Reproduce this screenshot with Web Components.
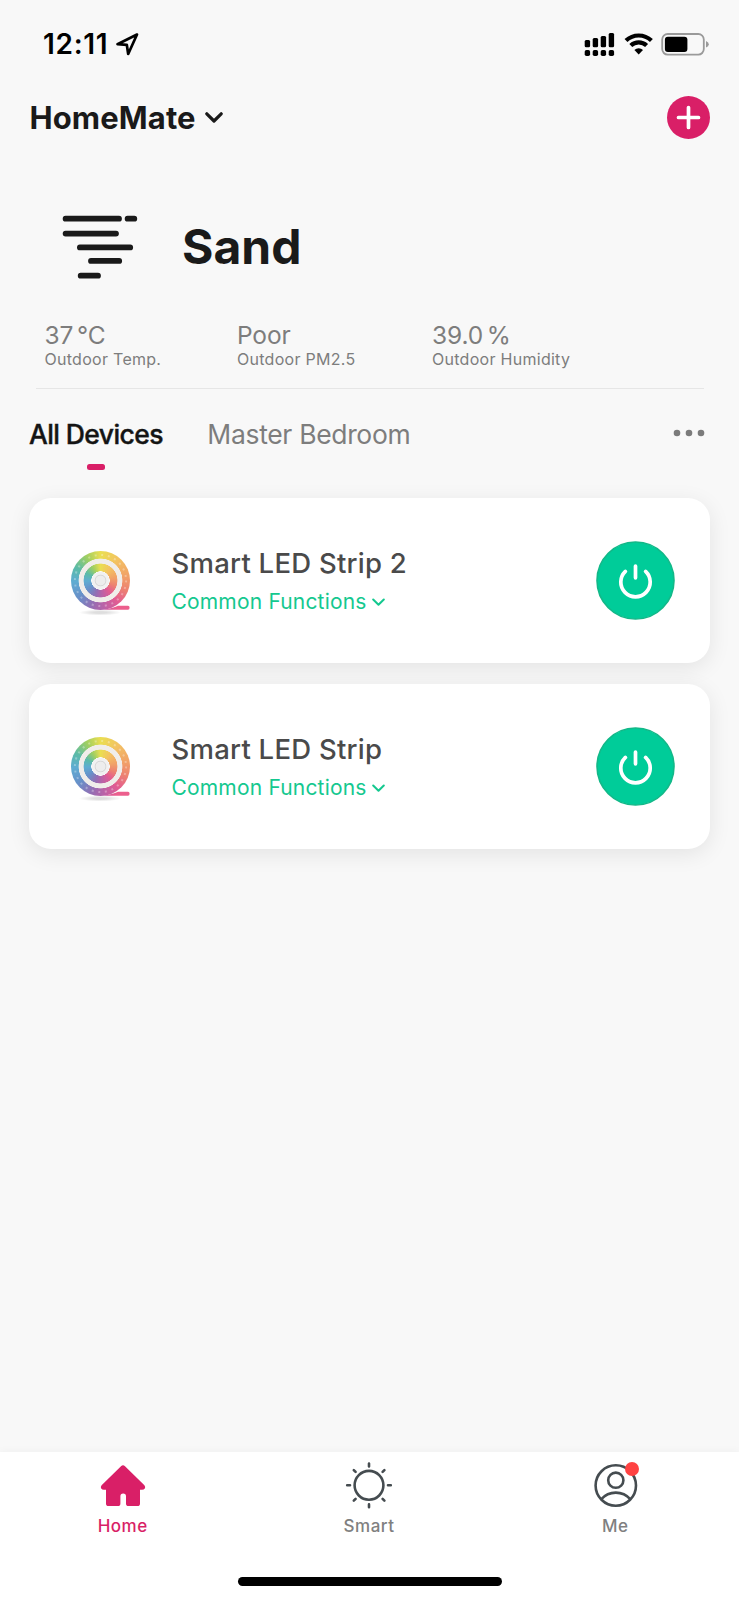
<!DOCTYPE html>
<html lang="en">
<head>
<meta charset="utf-8">
<title>HomeMate</title>
<style>
  body {
    margin: 0;
    background: #f8f8f8;
    font-family: Inter, "Liberation Sans", sans-serif;
    -webkit-font-smoothing: antialiased;
  }
</style>
</head>
<body>
<home-app>
  <status-bar slot="top" time="12:11"></status-bar>
  <home-header slot="top">HomeMate</home-header>
  <weather-panel condition="Sand">
    <weather-stat value="37 °C" label="Outdoor Temp."></weather-stat>
    <weather-stat value="Poor" label="Outdoor PM2.5"></weather-stat>
    <weather-stat value="39.0 %" label="Outdoor Humidity"></weather-stat>
  </weather-panel>
  <room-tabs>
    <room-tab active>All Devices</room-tab>
    <room-tab>Master Bedroom</room-tab>
  </room-tabs>
  <device-list>
    <device-card name="Smart LED Strip 2"></device-card>
    <device-card name="Smart LED Strip"></device-card>
  </device-list>
  <tab-bar slot="bottom">
    <tab-item icon="home" active>Home</tab-item>
    <tab-item icon="sun">Smart</tab-item>
    <tab-item icon="user" badge>Me</tab-item>
  </tab-bar>
</home-app>

<script>
class BaseElement extends HTMLElement {
  constructor() {
    super();
    this.attachShadow({ mode: 'open' });
  }

  connectedCallback() {
    this.shadowRoot.innerHTML = this.template();
  }

  attr(name) {
    return this.getAttribute(name) || '';
  }
}

class HomeApp extends BaseElement {
  template() {
    return `
      <style>
        :host {
          display: flex;
          flex-direction: column;
          height: 1600px;
          overflow: hidden;
        }
        main { flex: 1; min-height: 0; }
      </style>
      <slot name="top"></slot>
      <main><slot></slot></main>
      <slot name="bottom"></slot>
    `;
  }
}

class StatusBar extends BaseElement {
  template() {
    return `
      <style>
        :host {
          display: flex;
          align-items: center;
          justify-content: space-between;
          box-sizing: border-box;
          height: 88px;
          padding: 0 30px 0 43px;
          color: #000;
        }
        .left { display: flex; align-items: center; gap: 7px; }
        .time { font-size: 28px; font-weight: 600; line-height: 34px; letter-spacing: 0.7px; }
        svg { display: block; }
      </style>
      <div class="left">
        <span class="time">${this.attr('time')}</span>
        <svg width="24" height="24" viewBox="0 0 24 24" fill="none" stroke="#000" stroke-width="2.7" stroke-linejoin="round">
          <path d="M22 2.5 L2.5 12.2 L11.8 12.8 L13.2 22 Z"/>
        </svg>
      </div>
      <svg width="126" height="24" viewBox="0 0 126 24">
        <g fill="#000">
          <rect x="1.7" y="8" width="5.4" height="7.3" rx="1.5"/>
          <rect x="9.7" y="6" width="5.4" height="9.3" rx="1.5"/>
          <rect x="17.7" y="3.9" width="5.4" height="11.4" rx="1.5"/>
          <rect x="25.7" y="1" width="5.4" height="14.3" rx="1.5"/>
          <rect x="1.7" y="18" width="5.4" height="6" rx="1.8"/>
          <rect x="9.7" y="18" width="5.4" height="6" rx="1.8"/>
          <rect x="17.7" y="18" width="5.4" height="6" rx="1.8"/>
          <rect x="25.7" y="18" width="5.4" height="6" rx="1.8"/>
        </g>
        <g fill="none" stroke="#000" stroke-width="4.2">
          <path d="M43 8.6 A18.4 18.4 0 0 1 68.4 8.6"/>
          <path d="M47.8 13.6 A11.4 11.4 0 0 1 63.6 13.6"/>
        </g>
        <path d="M55.7 22.4 L51.4 18 A6 6 0 0 1 60 18 Z"/>
        <rect x="79.2" y="2" width="41.6" height="20.6" rx="5.5" fill="none" stroke="#9a9a9a" stroke-width="1.8"/>
        <rect x="81.9" y="4.7" width="22.5" height="15.2" rx="3"/>
        <path d="M123 9 Q125.8 10.2 125.8 12.3 Q125.8 14.4 123 15.6 Z" fill="#9a9a9a"/>
      </svg>
    `;
  }
}

class HomeHeader extends BaseElement {
  template() {
    return `
      <style>
        :host {
          display: flex;
          align-items: center;
          justify-content: space-between;
          height: 60px;
          padding: 0 29px 0 29.5px;
          color: #1a1a1a;
        }
        .title {
          display: flex;
          align-items: center;
          gap: 9.5px;
          font-size: 31px;
          font-weight: 700;
          line-height: 38px;
          letter-spacing: 0.1px;
        }
        svg { display: block; }
        .add { margin-top: -1px; }
      </style>
      <div class="title">
        <slot></slot>
        <svg width="18" height="12" viewBox="0 0 18 12" fill="none" stroke="#1a1a1a" stroke-width="3.2" stroke-linecap="round" stroke-linejoin="round">
          <path d="M1.8 1.8 L9 9 L16.2 1.8"/>
        </svg>
      </div>
      <svg class="add" width="43" height="43" viewBox="0 0 43 43">
        <circle cx="21.5" cy="21.5" r="21.5" fill="#d91f67"/>
        <path d="M21.5 11.5 V31.5 M11.5 21.5 H31.5" stroke="#fff" stroke-width="3.7" stroke-linecap="round"/>
      </svg>
    `;
  }
}

class WeatherPanel extends BaseElement {
  template() {
    return `
      <style>
        :host { display: block; padding: 64px 35.5px 0 35.5px; }
        .main {
          display: flex;
          align-items: center;
          gap: 43px;
          height: 70px;
          padding-left: 26.5px;
        }
        .name {
          font-size: 48px;
          font-weight: 700;
          line-height: 58px;
          color: #1a1a1a;
          letter-spacing: 0;
        }
        svg { display: block; }
        .stats {
          display: grid;
          grid-template-columns: 192.5px 195px 1fr;
          padding: 40px 0 18px 9px;
          border-bottom: 1px solid #e6e6e6;
        }
      </style>
      <div class="main">
        <svg width="77" height="64" viewBox="0 0 77 64" stroke="#1a1a1a" stroke-width="5.8" stroke-linecap="round">
          <path d="M3.6 3.7 H57 M65.6 3.7 H72.3 M3.6 18.6 H54 M17.9 32.4 H68.2 M29 45.9 H57.2 M18.7 60.7 H36"/>
        </svg>
        <div class="name">${this.attr('condition')}</div>
      </div>
      <div class="stats"><slot></slot></div>
    `;
  }
}

class WeatherStat extends BaseElement {
  template() {
    return `
      <style>
        :host { display: block; color: #7d7d7d; white-space: nowrap; }
        .value { font-size: 24.5px; line-height: 26px; letter-spacing: -0.15px; word-spacing: -3px; }
        .label { font-size: 16px; line-height: 22px; letter-spacing: 0.28px; }
      </style>
      <div class="value">${this.attr('value')}</div>
      <div class="label">${this.attr('label')}</div>
    `;
  }
}

class RoomTabs extends BaseElement {
  template() {
    return `
      <style>
        :host {
          display: flex;
          align-items: flex-start;
          justify-content: space-between;
          height: 80px;
          padding: 29px 34px 0 29px;
        }
        .tabs { display: flex; gap: 44.5px; }
        svg { display: block; margin-top: 11px; }
      </style>
      <div class="tabs"><slot></slot></div>
      <svg width="32" height="8" viewBox="0 0 32 8" fill="#7b7b7b">
        <circle cx="4" cy="4" r="3.3"/><circle cx="16" cy="4" r="3.3"/><circle cx="28" cy="4" r="3.3"/>
      </svg>
    `;
  }
}

class RoomTab extends BaseElement {
  template() {
    return `
      <style>
        :host {
          display: flex;
          flex-direction: column;
          align-items: center;
          gap: 13px;
          font-size: 26.5px;
          line-height: 33px;
          letter-spacing: -0.33px;
          color: #7d7d7d;
          white-space: nowrap;
        }
        :host([active]) {
          color: #141414;
          font-weight: 500;
          letter-spacing: -0.6px;
          -webkit-text-stroke: 0.4px #141414;
        }
        .mark { width: 18px; height: 6px; border-radius: 2.5px; }
        :host([active]) .mark { background: #d91f67; }
      </style>
      <span><slot></slot></span>
      <div class="mark"></div>
    `;
  }
}

class DeviceList extends BaseElement {
  template() {
    return `
      <style>
        :host { display: flex; flex-direction: column; gap: 21px; padding: 0 29px 0 28.5px; }
      </style>
      <slot></slot>
    `;
  }
}

class LedReel extends BaseElement {
  template() {
    return `
      <style>
        :host { display: block; position: relative; width: 59px; height: 59px; }
        .disc {
          width: 59px;
          height: 59px;
          border-radius: 50%;
          opacity: 0.92;
          background:
            radial-gradient(circle, #ececec 0 4.6px, #d2d2d2 5.3px, #f0f0f0 6.2px 8.4px, #fafafa 9px, transparent 9.4px 16.6px, #efece9 17.2px 21.6px, transparent 22.2px),
            conic-gradient(#e9dc43, #f2bd55 40deg, #f09a5c 80deg, #ec7865 110deg, #e14f88 140deg, #b9549f 170deg, #8c62ad 198deg, #5c86c4 232deg, #52a6cf 268deg, #4eb6a0 298deg, #98cb55 330deg, #e9dc43);
        }
        svg { position: absolute; left: 0; top: 0; overflow: visible; }
      </style>
      <div class="disc"></div>
      <svg width="59" height="66" viewBox="0 0 59 66">
        <defs>
          <radialGradient id="ground"><stop offset="0.3" stop-color="#000" stop-opacity="0.13"/><stop offset="1" stop-color="#000" stop-opacity="0"/></radialGradient>
          <linearGradient id="tail"><stop offset="0" stop-color="#c855a0"/><stop offset="0.5" stop-color="#ec5f8d"/></linearGradient>
        </defs>
        <circle cx="29.5" cy="29.5" r="25.6" fill="none" stroke="#fff" stroke-opacity="0.3" stroke-width="2" stroke-dasharray="2 4.7"/>
        <ellipse cx="29" cy="61.5" rx="21" ry="3" fill="url(#ground)"/>
        <path d="M33 58.8 Q43 57 47 54.8 H57 Q58.6 54.8 58.6 56.8 T57 58.8 Z" fill="url(#tail)"/>
      </svg>
    `;
  }
}

class DeviceCard extends BaseElement {
  template() {
    return `
      <style>
        :host {
          display: flex;
          align-items: center;
          box-sizing: border-box;
          height: 165px;
          padding: 0 35.5px 0 42px;
          border-radius: 22px;
          background: #fff;
          box-shadow: 0 5px 22px rgba(0, 0, 0, 0.085);
        }
        .info { flex: 1; padding-left: 42px; padding-top: 4px; }
        .name {
          font-size: 27.5px;
          font-weight: 500;
          line-height: 38px;
          letter-spacing: 0.25px;
          color: #4a4a4a;
        }
        .functions {
          display: flex;
          align-items: center;
          gap: 5px;
          margin-top: 1px;
          font-size: 21px;
          line-height: 38px;
          letter-spacing: 0.18px;
          color: #14c88f;
        }
        svg { display: block; }
      </style>
      <led-reel></led-reel>
      <div class="info">
        <div class="name">${this.attr('name')}</div>
        <div class="functions">
          <span>Common Functions</span>
          <svg width="13" height="9" viewBox="0 0 13 9" fill="none" stroke="#14c88f" stroke-width="2" stroke-linecap="round" stroke-linejoin="round">
            <path d="M1.2 1.5 L6.5 6.8 L11.8 1.5"/>
          </svg>
        </div>
      </div>
      <svg width="79" height="79" viewBox="0 0 79 79">
        <circle cx="39.5" cy="39.5" r="38.5" fill="#00cc99" stroke="#12b888" stroke-width="1.6"/>
        <g fill="none" stroke="#fff" stroke-width="3.7" stroke-linecap="round">
          <path d="M29.4 30.4 A14.7 14.7 0 1 0 49.6 30.4 M39.5 25 V36.8"/>
        </g>
      </svg>
    `;
  }
}

class TabBar extends BaseElement {
  template() {
    return `
      <style>
        :host {
          display: flex;
          flex-direction: column;
          align-items: center;
          justify-content: space-between;
          height: 148px;
          background: #fff;
          box-shadow: 0 -1px 8px rgba(0, 0, 0, 0.035);
        }
        nav { display: grid; grid-template-columns: repeat(3, 1fr); width: 100%; }
        .indicator {
          width: 264px;
          height: 9px;
          margin-bottom: 14.5px;
          border-radius: 5px;
          background: #000;
        }
      </style>
      <nav><slot></slot></nav>
      <div class="indicator"></div>
    `;
  }
}

const TAB_ICONS = {
  home: `
    <path d="M22 5.2 Q24 3.4 26 5.2 L45.4 24.2 Q46.8 26 45.8 27.4 Q45 28.8 43 28.8 H41 V42.4 Q41 45 38.4 45 H29.6 Q27 45 27 42.4 V35.4 Q27 32.6 24.2 32.6 Q21.4 32.6 21.4 35.4 V42.4 Q21.4 45 18.8 45 H9.6 Q7 45 7 42.4 V28.8 H5 Q3 28.8 2.2 27.4 Q1.2 26 2.6 24.2 Z" fill="#d91f67"/>`,
  sun: `
    <g fill="none" stroke="#454c50" stroke-width="2.6" stroke-linecap="round">
      <circle cx="24" cy="24.3" r="14.4"/>
      <path d="M24 2.6 V5.4 M24 43.4 V46.2 M2.2 24.3 H5 M43 24.3 H45.8 M8.8 9.1 L10.6 10.9 M37.6 37.9 L39.4 39.7 M39.4 9.1 L37.6 10.9 M10.6 37.9 L8.8 39.7"/>
    </g>`,
  user: `
    <g fill="none" stroke="#454c50" stroke-width="2.6">
      <circle cx="23.8" cy="24.5" r="20.2"/>
      <circle cx="23.8" cy="19.2" r="7.6"/>
      <path d="M9.1 38.4 Q15.1 31.6 23.8 31.6 Q32.5 31.6 38.5 38.4"/>
    </g>`
};

class TabItem extends BaseElement {
  template() {
    return `
      <style>
        :host {
          display: flex;
          flex-direction: column;
          align-items: center;
          padding-top: 9px;
          font-size: 17px;
          font-weight: 500;
          line-height: 22px;
          letter-spacing: 0.5px;
          color: #808080;
        }
        :host([active]) { color: #d91f67; }
        .icon { position: relative; width: 48px; height: 48px; margin-bottom: 6px; }
        span { margin-right: 1px; }
        .dot {
          position: absolute;
          top: 1px;
          right: 1px;
          width: 14px;
          height: 14px;
          border-radius: 50%;
          background: #ff4242;
        }
      </style>
      <div class="icon">
        <svg width="48" height="48" viewBox="0 0 48 48">${TAB_ICONS[this.attr('icon')]}</svg>
        ${this.hasAttribute('badge') ? '<div class="dot"></div>' : ''}
      </div>
      <span><slot></slot></span>
    `;
  }
}

customElements.define('home-app', HomeApp);
customElements.define('status-bar', StatusBar);
customElements.define('home-header', HomeHeader);
customElements.define('weather-panel', WeatherPanel);
customElements.define('weather-stat', WeatherStat);
customElements.define('room-tabs', RoomTabs);
customElements.define('room-tab', RoomTab);
customElements.define('device-list', DeviceList);
customElements.define('led-reel', LedReel);
customElements.define('device-card', DeviceCard);
customElements.define('tab-bar', TabBar);
customElements.define('tab-item', TabItem);
</script>
</body>
</html>
